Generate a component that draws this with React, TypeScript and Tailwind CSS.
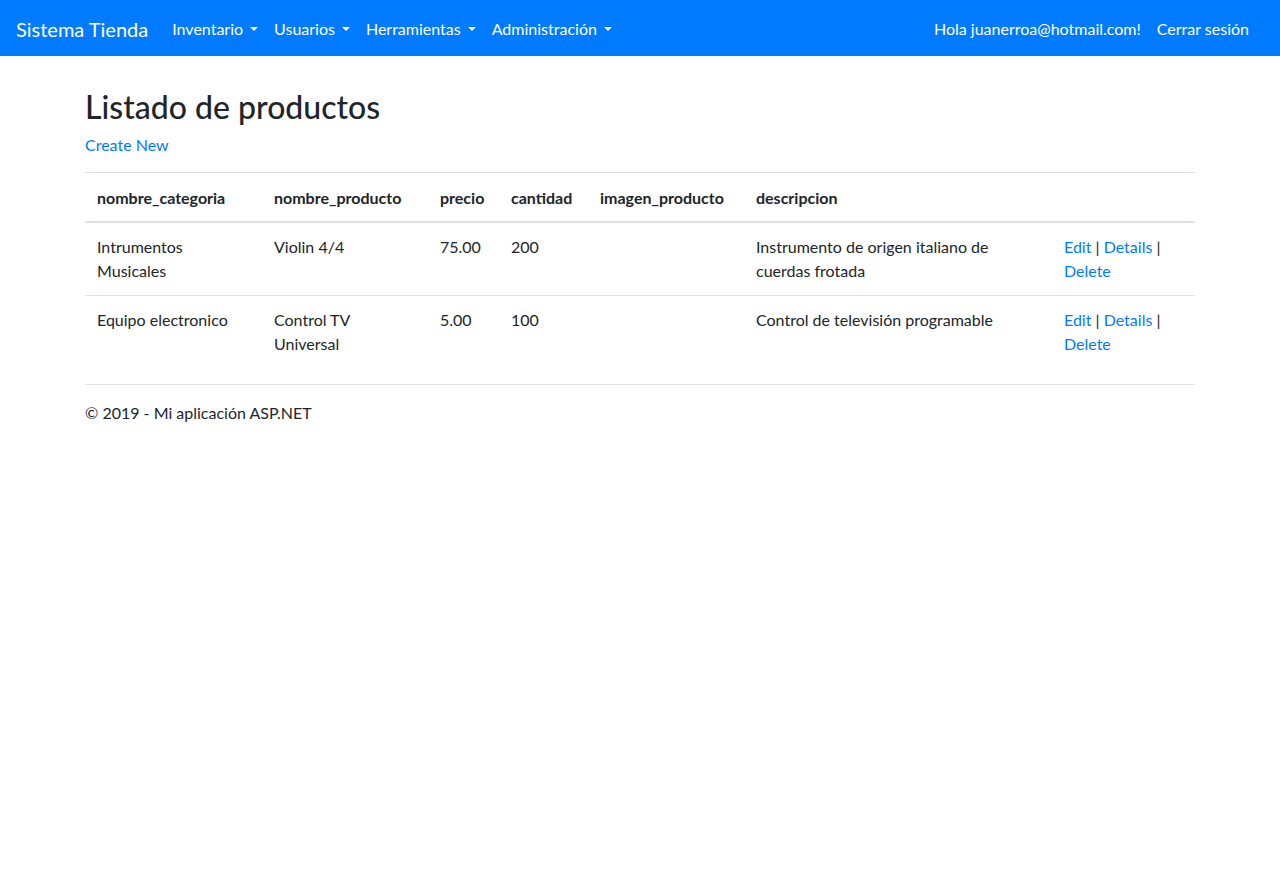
import React from "react";

const font = { fontFamily: '"Segoe UI", Lato, "Noto Sans", sans-serif' };

function Caret() {
  return (
    <span className="inline-block w-0 h-0 ml-[7px] align-[0.255em] border-t-[0.3em] border-t-white border-x-[0.3em] border-x-transparent border-b-0" />
  );
}

function NavItem({ label }: { label: string }) {
  return (
    <li>
      <a className="block px-2 py-2 text-white text-[16px] leading-6 cursor-pointer whitespace-nowrap">
        {label}
        <Caret />
      </a>
    </li>
  );
}

const rows = [
  {
    cat: "Intrumentos Musicales",
    prod: "Violin 4/4",
    precio: "75.00",
    cant: "200",
    img: "",
    desc: "Instrumento de origen italiano de cuerdas frotada",
  },
  {
    cat: "Equipo electronico",
    prod: "Control TV Universal",
    precio: "5.00",
    cant: "100",
    img: "",
    desc: "Control de televisión programable",
  },
];

export default function App() {
  return (
    <div className="min-h-[888px] bg-white text-[#212529] text-[16px] leading-6" style={font}>
      <nav className="h-[56px] bg-[#007bff] flex items-center pl-4 pr-[23px] pt-[2px]">
        <a className="text-white text-[20px] leading-[30px] mr-4 py-[5px] whitespace-nowrap">Sistema Tienda</a>
        <ul className="flex items-center flex-1">
          <NavItem label="Inventario" />
          <NavItem label="Usuarios" />
          <NavItem label="Herramientas" />
          <NavItem label="Administración" />
        </ul>
        <ul className="flex items-center">
          <li>
            <a className="block px-2 py-2 text-white whitespace-nowrap">Hola juanerroa@hotmail.com!</a>
          </li>
          <li>
            <a className="block px-2 py-2 text-white whitespace-nowrap">Cerrar sesión</a>
          </li>
        </ul>
      </nav>

      <div className="w-[1140px] mx-auto px-[15px]">
        <main className="pt-[32px]">
          <h2 className="text-[32px] leading-[38.4px] font-medium mb-[7px]">Listado de productos</h2>
          <p className="mb-[15px]">
            <a className="text-[#007bff] cursor-pointer">Create New</a>
          </p>
          <table className="w-full table-fixed border-collapse mb-[15px]">
            <colgroup>
              <col className="w-[177px]" />
              <col className="w-[166px]" />
              <col className="w-[71px]" />
              <col className="w-[89px]" />
              <col className="w-[156px]" />
              <col className="w-[308px]" />
              <col className="w-[143px]" />
            </colgroup>
            <thead>
              <tr>
                {["nombre_categoria", "nombre_producto", "precio", "cantidad", "imagen_producto", "descripcion", ""].map(
                  (h, i) => (
                    <th
                      key={i}
                      className="text-left font-bold pt-[13px] pb-[11px] px-3 align-bottom border-t border-t-[#dee2e6] border-b-2 border-b-[#dee2e6] whitespace-nowrap"
                    >
                      {h}
                    </th>
                  )
                )}
              </tr>
            </thead>
            <tbody>
              {rows.map((r, i) => (
                <tr key={i}>
                  <td className="p-3 align-top border-t border-[#dee2e6]">{r.cat}</td>
                  <td className="p-3 align-top border-t border-[#dee2e6]">{r.prod}</td>
                  <td className="p-3 align-top border-t border-[#dee2e6]">{r.precio}</td>
                  <td className="p-3 align-top border-t border-[#dee2e6]">{r.cant}</td>
                  <td className="p-3 align-top border-t border-[#dee2e6]">{r.img}</td>
                  <td className="p-3 align-top border-t border-[#dee2e6]">{r.desc}</td>
                  <td className="p-3 align-top border-t border-[#dee2e6]">
                    <a className="text-[#007bff] cursor-pointer">Edit</a> |{" "}
                    <a className="text-[#007bff] cursor-pointer">Details</a> |{" "}
                    <a className="text-[#007bff] cursor-pointer">Delete</a>
                  </td>
                </tr>
              ))}
            </tbody>
          </table>
        </main>
        <hr className="border-0 border-t border-t-[#dee2e6] mt-4 mb-4" />
        <footer>
          <p className="mb-4">© 2019 - Mi aplicación ASP.NET</p>
        </footer>
      </div>
    </div>
  );
}
